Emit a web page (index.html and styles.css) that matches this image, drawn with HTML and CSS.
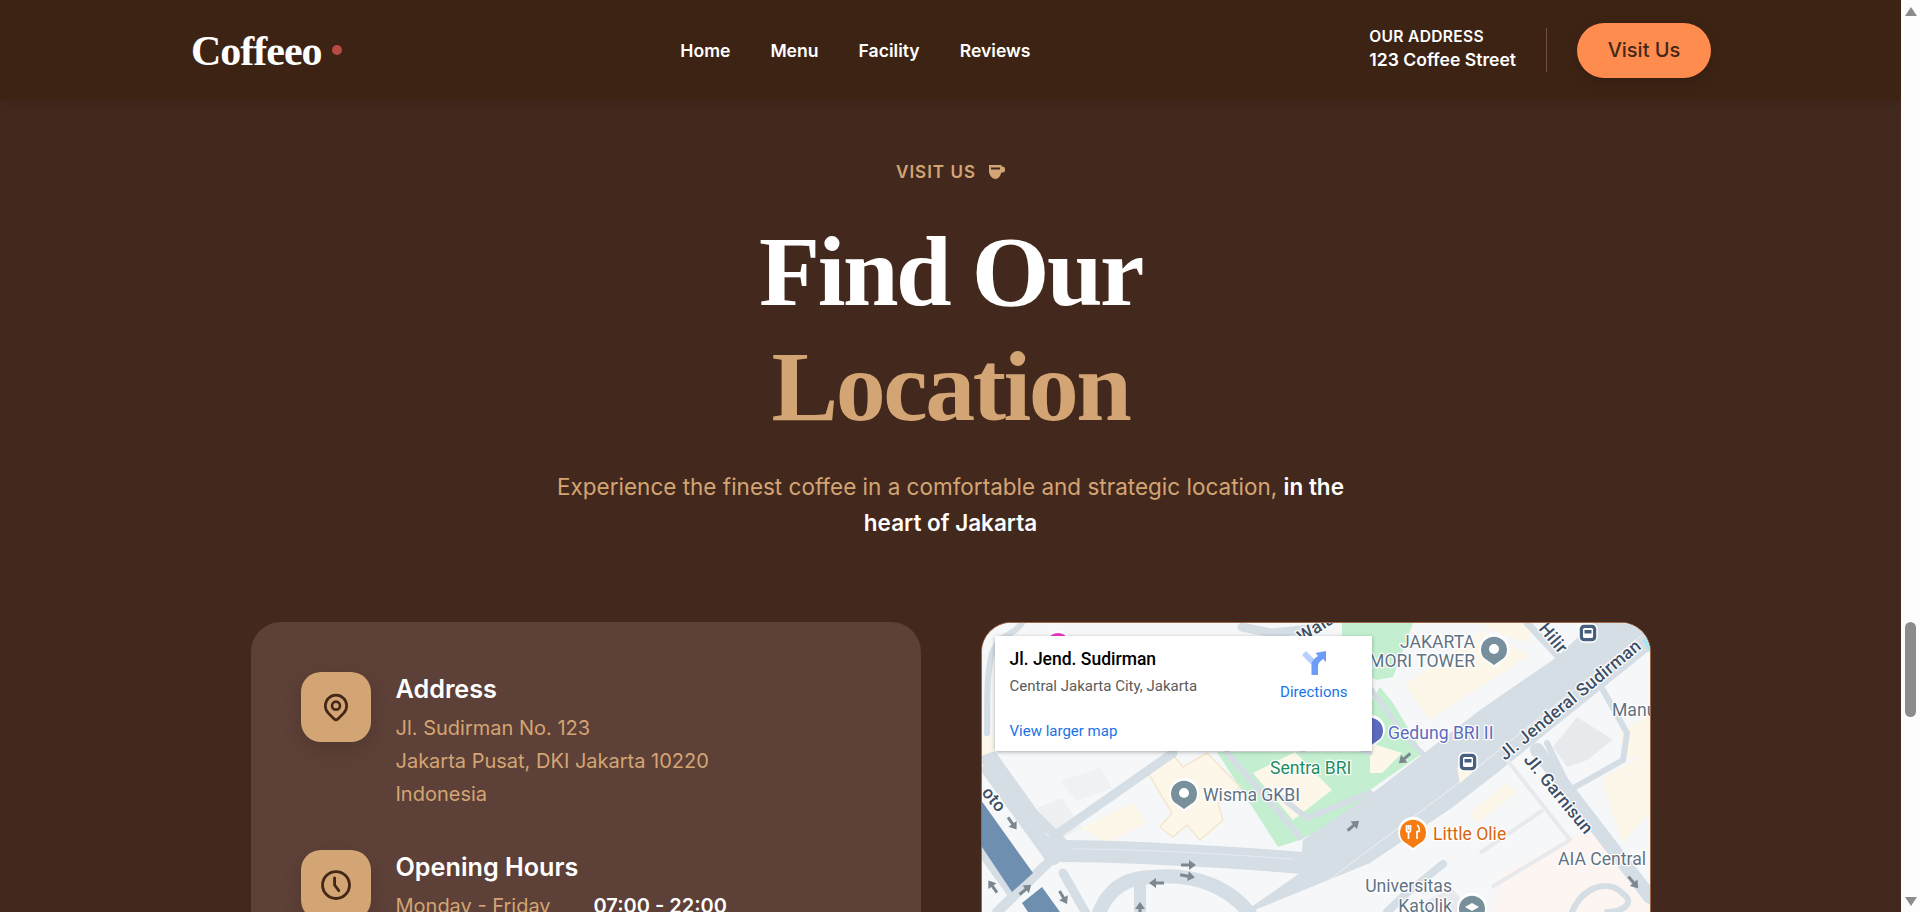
FILE: index.html
```html
<!DOCTYPE html>
<html lang="en">
<head>
    <meta charset="UTF-8">
    <title>Coffeeo - Find Our Location</title>
    <link rel="stylesheet" href="styles.css">
</head>
<body>
    <div class="page">
        <header class="site-header">
            <div class="logo">Coffeeo<span class="logo-dot"></span></div>
            <nav class="main-nav">
                <a href="#">Home</a>
                <a href="#">Menu</a>
                <a href="#">Facility</a>
                <a href="#">Reviews</a>
            </nav>
            <div class="header-right">
                <div class="header-address">
                    <span>OUR ADDRESS</span>
                    <strong>123 Coffee Street</strong>
                </div>
                <a class="visit-btn" href="#">Visit Us</a>
            </div>
        </header>

        <section class="location">
            <div class="eyebrow">
                VISIT US
                <svg class="cup" viewBox="0 0 16 14" width="16" height="14">
                    <path d="M0 0h12.5v1.5h1A2.5 2.5 0 0 1 16 4v1a2.5 2.5 0 0 1-2.500 2.500h-1.200C11.500 11 9.500 14 6.500 14S.8 11 0 7z" fill="#d4a574"/>
                    <rect x="2" y="2.500" width="9" height="2" fill="#43291d"/>
                </svg>
            </div>
            <h1>Find Our<span class="accent">Location</span></h1>
            <p class="lead">Experience the finest coffee in a comfortable and strategic location, <strong>in the heart of Jakarta</strong></p>

            <div class="columns">
                <div class="info-card">
                    <div class="info-row">
                        <div class="info-icon">
                            <svg viewBox="0 0 24 24" width="32" height="32" fill="none" stroke="#432818" stroke-width="2">
                                <circle cx="12" cy="11" r="3"/>
                                <path d="M17.700 16.700 13.400 21a2 2 0 0 1-2.800 0l-4.300-4.300a8 8 0 1 1 11.400 0z"/>
                            </svg>
                        </div>
                        <div class="info-text">
                            <h3>Address</h3>
                            <p>Jl. Sudirman No. 123</p>
                            <p>Jakarta Pusat, DKI Jakarta 10220</p>
                            <p>Indonesia</p>
                        </div>
                    </div>
                    <div class="info-row">
                        <div class="info-icon">
                            <svg viewBox="0 0 24 24" width="34" height="34" fill="none" stroke="#432818" stroke-width="2" stroke-linecap="round">
                                <circle cx="12" cy="12" r="9.500"/>
                                <path d="M11 7v5l3 4"/>
                            </svg>
                        </div>
                        <div class="info-text">
                            <h3>Opening Hours</h3>
                            <div class="hours"><span>Monday - Friday</span><strong>07:00 - 22:00</strong></div>
                        </div>
                    </div>
                </div>

                <div class="map-box">
                    <svg class="map" viewBox="0 0 668 600" width="668" height="600">
                        <defs>
                            <path id="arrow" d="M-7-1.500H1V-5L8 0 1 5V1.500H-7z" fill="#7d8790"/>
                        </defs>
                        <rect width="668" height="600" fill="#f6f7f8"/>

                        <!-- parks and building plots -->
                        <polygon points="235,129 388,129 388,184 318,217 296,224" fill="#c3efd0"/>
                        <polygon points="388,80 398,64 411,80 441,130 388,167" fill="#c3efd0"/>
                        <polygon points="360,0 431,0 411,54 395,57 388,54 360,60" fill="#c3efd0"/>
                        <polygon points="271,150 313,129 350,167 311,197" fill="#fdf7e9"/>
                        <polygon points="388,120 420,130 400,150 388,150" fill="#fdf7e9"/>
                        <polygon points="423,62 500,8 548,32 447,97" fill="#fdf7e9"/>
                        <polygon points="500,0 550,0 546,20 510,8" fill="#fdf7e9"/>
                        <polygon points="166,150 191,132 201,144 225,130 258,164 236,180 241,197 218,217 205,202 191,214 178,204 190,190" fill="#fdf7e9" stroke="#f3e7cd" stroke-width="1.500"/>
                        <polygon points="100,205 150,180 165,200 125,220" fill="#fdf7e9"/>
                        <polygon points="0,115 12,110 12,130 0,135" fill="#fdf7e9"/>
                        <polygon points="620,155 668,130 668,190 640,220" fill="#fdf7e9"/>
                        <polygon points="638,110 668,90 668,135 640,135" fill="#fdf7e9"/>
                        <polygon points="520,250 610,205 668,265 668,289 510,289" fill="#fdf5f2"/>
                        <polygon points="55,185 80,175 100,205 78,216" fill="#eef0f2"/>
                        <polygon points="78,158 118,145 130,165 95,178" fill="#f0f1f3"/>
                        <polygon points="571,124 595,94 631,117 605,137 585,144" fill="#e7e9ed"/>
                        <polygon points="440,280 470,265 490,289 440,289" fill="#e7e9ed"/>

                        <!-- roads -->
                        <g fill="none" stroke="#d5dde5" stroke-linecap="round" stroke-linejoin="round">
                            <path d="M71 214 191 130" stroke-width="9"/>
                            <path d="M3 137 11 134 51 190 81 220" stroke-width="10"/>
                            <path d="M8 147 71 234" stroke-width="16"/>
                            <path d="M72 228C150 228 260 235 321 240" stroke-width="22"/>
                            <path d="M71 235 15 289" stroke-width="10"/>
                            <path d="M115 295C125 265 145 254 170 254 215 250 250 265 271 295" stroke-width="14"/>
                            <path d="M158 263V295" stroke-width="12"/>
                            <path d="M81 250 105 292" stroke-width="9"/>
                            <path d="M0 227 31 270" stroke-width="12"/>
                            <path d="M245 130 318 214" stroke-width="6"/>
                            <path d="M300 175 325 195 388 170" stroke-width="6"/>
                            <path d="M320 128 345 110 388 130" stroke-width="5"/>
                            <path d="M388 65 425 115 445 135" stroke-width="5"/>
                            <path d="M555 127 668 274" stroke-width="14"/>
                            <path d="M565 120 588 167 641 137 645 110 621 67" stroke-width="6"/>
                            <path d="M461 241 425 270 405 289" stroke-width="8"/>
                            <path d="M590 289C600 265 625 255 640 270 655 280 640 289 625 289" stroke-width="6"/>
                            <path d="M545 0 575 32" stroke-width="7"/>
                            <path d="M40 0C30 15 20 8 10 30 3 60 6 90 5 110" stroke-width="6"/>
                            <path d="M260 4 290 10 330 6" stroke-width="9"/>
                        </g>
                        <polygon points="321,217 388,172 498,87 575,34 611,0 668,0 668,27 515,150 471,184 388,240 268,289 262,289 318,250" fill="#d5dde5"/>
                        <path d="M660 12 470 165 340 262" fill="none" stroke="#eef1f4" stroke-width="1"/>
                        <path d="M90 226C170 226 250 232 312 236" fill="none" stroke="#e6ebf0" stroke-width="1"/>
                        <g fill="none" stroke="#e7e9ed" stroke-width="4" stroke-linejoin="round">
                            <path d="M525 137 588 217 510 264"/>
                            <path d="M498 230 561 187"/>
                        </g>
                        <polygon points="655,10 668,0 668,25 662,22" fill="#a9e4ef" transform="translate(6 8)"/>
                        <polygon points="475,145 486,136 490,150 478,160" fill="#fdf7e9"/>
                        <polygon points="488,190 525,160 535,170 495,200" fill="#fdf7e9"/>

                        <!-- toll road -->
                        <polygon points="-1,177 51,250 30,269 0,224" fill="#6f8fb0"/>
                        <polygon points="40,280 60,264 78,289 46,289" fill="#6f8fb0"/>

                        <!-- one way arrows -->
                        <use href="#arrow" transform="translate(30 200) rotate(55)"/>
                        <use href="#arrow" transform="translate(206 242)"/>
                        <use href="#arrow" transform="translate(205 253) rotate(10)"/>
                        <use href="#arrow" transform="translate(175 260) rotate(180)"/>
                        <use href="#arrow" transform="translate(43 267) rotate(-40)"/>
                        <use href="#arrow" transform="translate(11 264) rotate(-125)"/>
                        <use href="#arrow" transform="translate(81 274) rotate(60)"/>
                        <use href="#arrow" transform="translate(158 287) rotate(-90)"/>
                        <use href="#arrow" transform="translate(371 203) rotate(-40)"/>
                        <use href="#arrow" transform="translate(423 135) rotate(140)"/>
                        <use href="#arrow" transform="translate(651 259) rotate(50)"/>

                        <!-- place markers -->
                        <circle cx="76" cy="22" r="13" fill="#ec3bc3" stroke="#fff" stroke-width="2"/>

                        <g class="pin" transform="translate(202 170)">
                            <path d="M0 19-11 10A15 15 0 1 1 11 10z" fill="#fff"/>
                            <path d="M0 16-10 9A13 13 0 1 1 10 9z" fill="#78909c"/>
                            <circle r="5" fill="#fff"/>
                        </g>
                        <g class="pin" transform="translate(512 26)">
                            <path d="M0 19-11 10A15 15 0 1 1 11 10z" fill="#fff"/>
                            <path d="M0 16-10 9A13 13 0 1 1 10 9z" fill="#78909c"/>
                            <circle r="5" fill="#fff"/>
                        </g>
                        <g class="pin" transform="translate(388 107)">
                            <path d="M0 19-11 10A15 15 0 1 1 11 10z" fill="#fff"/>
                            <path d="M0 16-10 9A13 13 0 1 1 10 9z" fill="#5c6bc0"/>
                        </g>
                        <g class="pin" transform="translate(431 209)">
                            <path d="M0 19-11 10A15 15 0 1 1 11 10z" fill="#fff"/>
                            <path d="M0 16-10 9A13 13 0 1 1 10 9z" fill="#f57c12"/>
                            <path d="M-6.500-7V-2Q-6.500 0-4.500 0V7M-4.500-7V-2M-2.500-7V-2Q-2.500 0-4.500 0M4-7C6.500-6 6.500-1 6-0.500H4V7" fill="none" stroke="#fff" stroke-width="1.700"/>
                        </g>
                        <g class="pin" transform="translate(490 285)">
                            <path d="M0 19-11 10A15 15 0 1 1 11 10z" fill="#fff"/>
                            <path d="M0 16-10 9A13 13 0 1 1 10 9z" fill="#78909c"/>
                            <path d="M-7-1 0-5 7-1 0 3z" fill="#fff"/>
                        </g>

                        <!-- transit stops -->
                        <g transform="translate(606 10)">
                            <rect x="-9" y="-9" width="18" height="18" rx="5" fill="#46607e" stroke="#fff" stroke-width="1.500"/>
                            <rect x="-5" y="-5" width="10" height="10" rx="1.500" fill="#fff"/>
                            <rect x="-3.500" y="-3" width="7" height="3.500" fill="#46607e"/>
                        </g>
                        <g transform="translate(486 139)">
                            <rect x="-9" y="-9" width="18" height="18" rx="5" fill="#46607e" stroke="#fff" stroke-width="1.500"/>
                            <rect x="-5" y="-5" width="10" height="10" rx="1.500" fill="#fff"/>
                            <rect x="-3.500" y="-3" width="7" height="3.500" fill="#46607e"/>
                        </g>

                        <!-- labels -->
                        <g class="map-labels">
                            <text class="lbl-grey" x="221" y="178">Wisma GKBI</text>
                            <text class="lbl-green" x="288" y="151">Sentra BRI</text>
                            <text class="lbl-grey" x="493" y="25" text-anchor="end">JAKARTA</text>
                            <text class="lbl-grey" x="493" y="44" text-anchor="end">MORI TOWER</text>
                            <text class="lbl-indigo" x="406" y="116">Gedung BRI II</text>
                            <text class="lbl-orange" x="451" y="217">Little Olie</text>
                            <text class="lbl-grey" x="630" y="93">Manu</text>
                            <text class="lbl-grey" x="576" y="242">AIA Central</text>
                            <text class="lbl-grey" x="470" y="269" text-anchor="end">Universitas</text>
                            <text class="lbl-grey" x="470" y="289" text-anchor="end">Katolik</text>
                            <text class="lbl-road" transform="translate(523 138) rotate(-39.500)">Jl. Jenderal Sudirman</text>
                            <text class="lbl-road" transform="translate(541 137) rotate(50.500)">Jl. Garnisun</text>
                            <text class="lbl-road" transform="translate(556 6) rotate(50)">Hilir</text>
                            <text class="lbl-road" transform="translate(320 20) rotate(-32)">Wala</text>
                            <text class="lbl-road" transform="translate(-1 170) rotate(50)">oto</text>
                        </g>
                    </svg>

                    <div class="place-card">
                        <div class="place-top">
                            <div>
                                <div class="place-name">Jl. Jend. Sudirman</div>
                                <div class="place-area">Central Jakarta City, Jakarta</div>
                            </div>
                            <a class="directions" href="#">
                                <svg viewBox="0 0 24 24" width="24" height="24">
                                    <path d="M0 4 4 0 12 8 9.500 14z" fill="#b6d0fb"/>
                                    <path d="M9.500 24V14C9.500 10 12 8 16 5L13.500 2 24 0V11L21 8C18 10.500 16 12 16 15V24z" fill="#6d9cf6"/>
                                </svg>
                                Directions
                            </a>
                        </div>
                        <a class="larger-map" href="#">View larger map</a>
                    </div>
                </div>
            </div>
        </section>
    </div>

    <div class="scrollbar">
        <span class="arrow-up"></span>
        <span class="thumb"></span>
        <span class="arrow-down"></span>
    </div>
</body>
</html>
```

FILE: styles.css
```css
* { box-sizing: border-box; }
html, body { height: 100%; }
body {
    margin: 0;
    height: 912px;
    display: flex;
    overflow: hidden;
    font-family: Inter, "Liberation Sans", sans-serif;
    background: #43291d;
    color: #fff;
}
a { color: inherit; text-decoration: none; }

.page { flex: 1; min-width: 0; overflow: hidden; }

/* header */
.site-header {
    height: 100px;
    padding: 0 190px 0 191px;
    display: flex;
    align-items: center;
    justify-content: space-between;
    background: #3d2314;
    box-shadow: 0 4px 12px rgba(0, 0, 0, 0.12);
    position: relative;
}
.logo {
    margin-top: 2px;
    font-family: "Liberation Serif", serif;
    font-weight: 700;
    font-size: 42px;
    letter-spacing: -1px;
    display: flex;
    align-items: center;
}
.logo-dot {
    width: 10px;
    height: 10px;
    margin-left: 10px;
    margin-bottom: 2px;
    border-radius: 50%;
    background: #b84a45;
}
.main-nav { display: flex; gap: 40px; font-size: 17.6px; font-weight: 600; }
.header-right { display: flex; align-items: center; }
.header-address {
    display: flex;
    flex-direction: column;
    gap: 3px;
    padding-right: 30px;
    height: 44px;
    border-right: 1px solid rgba(212, 165, 116, 0.35);
    font-size: 16px;
    line-height: 20px;
    font-weight: 600;
}
.header-address span { font-size: 15.600px; letter-spacing: 0.3px; line-height: 20px; margin-top: -1px; }
.header-address strong { font-weight: 600; font-size: 17.600px; }
.visit-btn {
    margin-left: 30px;
    width: 134px;
    height: 55px;
    display: flex;
    align-items: center;
    justify-content: center;
    border-radius: 28px;
    background: #ff8c4f;
    color: #432818;
    font-size: 20px;
    font-weight: 500;
    box-shadow: 0 4px 12px rgba(0, 0, 0, 0.15);
}

/* location section */
.location { padding-top: 61px; }
.eyebrow {
    height: 22px;
    display: flex;
    align-items: center;
    justify-content: center;
    gap: 13px;
    color: #d4a574;
    font-size: 17px;
    font-weight: 600;
    letter-spacing: 1px;
}
h1 {
    margin: 31px 0 0;
    text-align: center;
    font-family: "Liberation Serif", serif;
    font-size: 100px;
    line-height: 115px;
    font-weight: 700;
    letter-spacing: -2.500px;
}
h1 .accent { display: block; color: #d4a574; }
.lead {
    width: 800px;
    margin: 25px auto 0;
    text-align: center;
    color: #d4a574;
    font-size: 22.500px;
    line-height: 36px;
}
.lead strong { color: #fff; font-weight: 600; }

.columns {
    width: 1400px;
    margin: 81px auto 0;
    display: grid;
    grid-template-columns: 670px 670px;
    gap: 60px;
}

.info-card {
    height: 600px;
    padding: 50px;
    border-radius: 30px;
    background: #5d4037;
}
.info-row { display: flex; gap: 25px; margin-bottom: 39px; }
.info-icon {
    flex: none;
    width: 70px;
    height: 70px;
    display: flex;
    align-items: center;
    justify-content: center;
    border-radius: 20px;
    background: #d4a574;
    box-shadow: 0 8px 20px rgba(0, 0, 0, 0.12);
}
.info-text h3 { margin: 0 0 6px; font-size: 25.200px; line-height: 34px; font-weight: 600; }
.info-text p { margin: 0; color: #d4a574; font-size: 20px; line-height: 33px; }
.hours { display: grid; grid-template-columns: 198px auto; color: #d4a574; font-size: 20px; line-height: 33px; }
.hours strong { color: #fff; font-weight: 600; }

/* map */
.map-box {
    position: relative;
    height: 600px;
    border: 1px solid #9c6a48;
    border-radius: 30px;
    overflow: hidden;
    background: #f6f7f8;
}
.map { display: block; }
.map-labels text {
    font-family: Roboto, "Liberation Sans", sans-serif;
    font-size: 17.600px;
    paint-order: stroke;
    stroke: #fff;
    stroke-width: 2.500px;
    stroke-linejoin: round;
}
.lbl-grey { fill: #5f7384; }
.lbl-green { fill: #1e8e63; }
.lbl-indigo { fill: #5c6bc0; }
.lbl-orange { fill: #d9650f; }
.map-labels .lbl-road { fill: #3c4f66; font-weight: 500; letter-spacing: 0.3px; }

.place-card {
    position: absolute;
    left: 13px;
    top: 13px;
    width: 377px;
    height: 115px;
    padding: 12px 15px;
    background: #fff;
    box-shadow: 0 1px 4px rgba(0, 0, 0, 0.3);
    font-family: Roboto, "Liberation Sans", sans-serif;
    display: flex;
    flex-direction: column;
    justify-content: space-between;
}
.place-top { display: flex; justify-content: space-between; }
.place-name { color: #000; font-size: 17.500px; font-weight: 500; line-height: 22px; }
.place-area { color: #5b5b5b; font-size: 15px; line-height: 20px; margin-top: 6px; }
.directions {
    display: flex;
    flex-direction: column;
    align-items: center;
    gap: 8px;
    margin-top: 3px;
    color: #1a73e8;
    font-size: 15px;
    line-height: 18px;
    padding-right: 9px;
}
.larger-map { color: #1a73e8; font-size: 15px; line-height: 18px; margin-bottom: -1px; }

/* browser scrollbar */
.scrollbar {
    flex: none;
    width: 19px;
    height: 912px;
    background: #fdfdfd;
    display: flex;
    flex-direction: column;
    align-items: center;
    padding: 7px 0 6px;
}
.arrow-up, .arrow-down {
    width: 0;
    height: 0;
    border-left: 6px solid transparent;
    border-right: 6px solid transparent;
}
.arrow-up { border-bottom: 9px solid #8c8c8c; }
.arrow-down { border-top: 9px solid #8c8c8c; margin-top: auto; }
.thumb {
    width: 11px;
    height: 95px;
    margin-top: 606px;
    border-radius: 6px;
    background: #8c8c8c;
}
```
